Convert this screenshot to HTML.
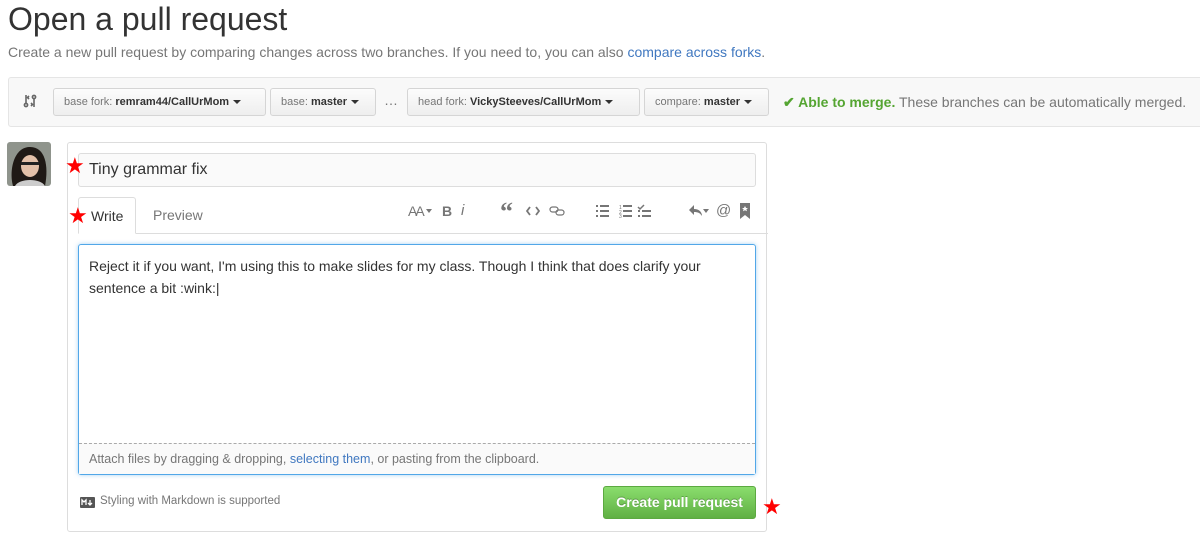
<!DOCTYPE html>
<html><head><meta charset="utf-8"><style>
*{box-sizing:border-box;margin:0;padding:0}
body{width:1200px;height:536px;background:#fff;font-family:"Liberation Sans",sans-serif;color:#333;position:relative;overflow:hidden}
.abs{position:absolute}
h1{position:absolute;left:8px;top:1px;font-size:32px;font-weight:normal;color:#333}
.sub{left:8px;top:44px;font-size:14px;color:#767676}
a{color:#4078c0;text-decoration:none}
.bar{left:8px;top:77px;width:1200px;height:50px;background:#f8f8f8;border:1px solid #e5e5e5;border-radius:3px}
.btn{position:absolute;top:88px;height:28px;border:1px solid #d5d5d5;border-radius:3px;background:linear-gradient(#fcfcfc,#eee);font-size:11px;color:#767676;line-height:26px;padding:0 10px}
.btn b{color:#333}
.caret{display:inline-block;border:4px solid transparent;border-top-color:#333;border-bottom:0;margin-left:4px;vertical-align:middle}
.star{color:#f00;font-size:22px;position:absolute}
.box{left:67px;top:142px;width:700px;height:390px;border:1px solid #ddd;border-radius:3px}
.title{left:78px;top:153px;width:678px;height:34px;border:1px solid #ddd;border-radius:3px;background:#fafafa;font-size:16px;line-height:32px;padding-left:10px;color:#333}
.tab{top:197px;height:37px;font-size:14px;line-height:37px}
.ta{left:78px;top:244px;width:678px;height:231px;border:1px solid #51a7e8;border-radius:3px;box-shadow:0 0 4px rgba(81,167,232,.5)}
.tb{font-size:14px;line-height:22px;padding:10px;color:#333}
.att{position:absolute;left:0;right:0;bottom:0;height:31px;border-top:1px dashed #aaa;background:#fafafa;font-size:12.5px;color:#767676;line-height:30px;padding-left:10px}
.green{left:603px;top:486px;width:153px;height:33px;border:1px solid #5ca941;border-radius:3px;background:linear-gradient(#8add6d,#60b044);color:#fff;font-weight:bold;font-size:14px;text-align:center;line-height:31px;text-shadow:0 -1px 0 rgba(0,0,0,.25)}
</style></head><body>
<h1>Open a pull request</h1>
<div class="abs sub">Create a new pull request by comparing changes across two branches. If you need to, you can also <a>compare across forks</a>.</div>
<div class="abs bar"></div>
<svg class="abs" style="left:22px;top:93px" width="16" height="16" viewBox="0 0 16 16"><g stroke="#666" stroke-width="1.6" fill="none"><path d="M4 2v8"/><circle cx="4" cy="12" r="1.6"/><path d="M12 14V6"/><circle cx="12" cy="4" r="1.6"/><path d="M7 3L5.5 4.5 7 6"/><path d="M9 10l1.5 1.5L9 13"/></g></svg>
<div class="btn" style="left:53px;width:213px">base fork: <b>remram44/CallUrMom</b><span class="caret"></span></div>
<div class="btn" style="left:270px;width:106px">base: <b>master</b><span class="caret"></span></div>
<div class="abs" style="left:384px;top:92px;font-size:14px;color:#767676">…</div>
<div class="btn" style="left:407px;width:233px">head fork: <b>VickySteeves/CallUrMom</b><span class="caret"></span></div>
<div class="btn" style="left:644px;width:125px">compare: <b>master</b><span class="caret"></span></div>
<div class="abs" style="left:783px;top:94px;font-size:14px;color:#767676"><span style="color:#55a532;font-weight:bold">✔ Able to merge.</span> These branches can be automatically merged.</div>
<svg class="abs" style="left:7px;top:142px" width="44" height="44" viewBox="0 0 44 44"><rect width="44" height="44" rx="3" fill="#8f948c"/><path d="M6 44C2 30 6 6 22 5s20 18 16 39z" fill="#1f1915"/><ellipse cx="23" cy="24" rx="9" ry="11" fill="#e3c0a8"/><rect x="14" y="20" width="18" height="3" fill="#222"/><path d="M8 44c4-8 26-8 30 0z" fill="#ccc"/></svg>
<div class="abs box"></div>
<div class="abs title">Tiny grammar fix</div>
<div class="star" style="left:65px;top:153px">★</div>
<div class="abs tab" style="left:78px;width:58px;border:1px solid #ddd;border-bottom:1px solid #fff;border-radius:3px 3px 0 0;padding-left:12px;background:#fff;z-index:2">Write</div>
<div class="star" style="left:68px;top:203px;z-index:3">★</div>
<div class="abs tab" style="left:153px;color:#767676">Preview</div>
<div class="abs" style="left:78px;top:233px;width:690px;border-top:1px solid #ddd"></div>
<div class="abs" style="left:408px;top:203px;font-size:14px;color:#767676;letter-spacing:-2px">AA</div>
<div class="abs" style="left:426px;top:209px;border:3px solid transparent;border-top:4px solid #767676"></div>
<div class="abs" style="left:442px;top:203px;font-size:14px;font-weight:bold;color:#767676">B</div>
<div class="abs" style="left:461px;top:202px;font-size:15px;font-style:italic;color:#767676">i</div>
<div class="abs" style="left:500px;top:197px;font-size:26px;font-weight:bold;color:#767676;font-family:'Liberation Serif',serif">“</div>
<svg class="abs" style="left:526px;top:205px" width="14" height="12" viewBox="0 0 14 12"><path d="M4 2L1 6l3 4M10 2l3 4-3 4" stroke="#767676" stroke-width="1.8" fill="none"/></svg>
<svg class="abs" style="left:549px;top:205px" width="16" height="12" viewBox="0 0 16 12"><g stroke="#767676" stroke-width="1.2" fill="none"><rect x="1" y="2" width="8" height="5" rx="2.5"/><rect x="7" y="5" width="8" height="5" rx="2.5"/></g></svg>
<svg class="abs" style="left:596px;top:204px" width="60" height="14" viewBox="0 0 60 14"><g fill="#767676"><rect x="0" y="1" width="2" height="2"/><rect x="0" y="6" width="2" height="2"/><rect x="0" y="11" width="2" height="2"/><rect x="4" y="1" width="9" height="2"/><rect x="4" y="6" width="9" height="2"/><rect x="4" y="11" width="9" height="2"/><rect x="27" y="1" width="9" height="2"/><rect x="27" y="6" width="9" height="2"/><rect x="27" y="11" width="9" height="2"/><rect x="46" y="6" width="9" height="2"/><rect x="46" y="11" width="9" height="2"/><rect x="42" y="6" width="2" height="2"/><rect x="42" y="11" width="2" height="2"/></g><text x="23" y="5" font-size="5" fill="#767676" font-family="Liberation Sans">1</text><text x="23" y="10" font-size="5" fill="#767676" font-family="Liberation Sans">2</text><text x="23" y="14" font-size="5" fill="#767676" font-family="Liberation Sans">3</text><path d="M42 3l2 2 4-4" stroke="#767676" stroke-width="1.5" fill="none"/></svg>
<svg class="abs" style="left:688px;top:204px" width="16" height="14" viewBox="0 0 16 14"><path d="M6 1L1 6l5 5V8c4 0 6 1 8 4 0-4-3-7-8-7z" fill="#767676"/></svg>
<div class="abs" style="left:703px;top:209px;border:3px solid transparent;border-top:4px solid #767676"></div>
<div class="abs" style="left:716px;top:202px;font-size:15px;color:#767676">@</div>
<svg class="abs" style="left:740px;top:203px" width="10" height="16" viewBox="0 0 10 16"><path d="M0 0h10v16L5 12 0 16z" fill="#767676"/><path d="M5 3l1 2h2l-1.6 1.3.6 2L5 7.2 3 8.3l.6-2L2 5h2z" fill="#fff"/></svg>
<div class="abs ta"><div class="tb">Reject it if you want, I'm using this to make slides for my class. Though I think that does clarify your sentence a bit :wink:|</div>
<div class="att">Attach files by dragging &amp; dropping, <a>selecting them</a>, or pasting from the clipboard.</div></div>
<svg class="abs" style="left:80px;top:497px" width="15" height="11" viewBox="0 0 15 11"><rect width="15" height="11" rx="1" fill="#555"/><path d="M2 8V3l2 2 2-2v5M10 3v5M8 6l2 2 2-2" stroke="#fff" stroke-width="1.3" fill="none"/></svg>
<div class="abs" style="left:100px;top:495px;font-size:11.5px;color:#767676">Styling with Markdown is supported</div>
<div class="abs green">Create pull request</div>
<div class="star" style="left:762px;top:494px">★</div>
</body></html>
